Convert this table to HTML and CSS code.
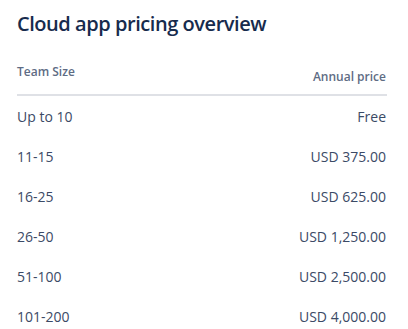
FILE: index.html
```html
<!DOCTYPE html>
<html>
<head>
<meta charset="utf-8">
<link rel="stylesheet" href="styles.css">
</head>
<body>
<div class="panel">
  <h2 class="title">Cloud app pricing overview</h2>
  <div class="table">
    <div class="head">
      <span class="th th-left">Team Size</span>
      <span class="th th-right">Annual price</span>
    </div>
    <div class="row"><span>Up to 10</span><span>Free</span></div>
    <div class="row"><span>11-15</span><span>USD 375.00</span></div>
    <div class="row"><span>16-25</span><span>USD 625.00</span></div>
    <div class="row"><span>26-50</span><span>USD 1,250.00</span></div>
    <div class="row"><span>51-100</span><span>USD 2,500.00</span></div>
    <div class="row"><span>101-200</span><span>USD 4,000.00</span></div>
  </div>
</div>
</body>
</html>
```
FILE: styles.css
```css
html, body {
  margin: 0;
  padding: 0;
  background: #ffffff;
}
.panel {
  width: 370px;
  padding: 10px 0 0 17px;
  font-family: "Open Sans", "Noto Sans", sans-serif;
}
.title {
  margin: 0;
  font-size: 20px;
  font-weight: 600;
  line-height: 28px;
  color: #172B4D;
  letter-spacing: -0.45px;
}
.table {
  margin-top: 26px;
}
.head {
  display: flex;
  justify-content: space-between;
  height: 30px;
  border-bottom: 2px solid #DFE1E6;
}
.th {
  font-size: 12px;
  font-weight: 600;
  color: #5E6C84;
  line-height: 16px;
}
.th-left {
  align-self: flex-start;
}
.th-right {
  align-self: flex-end;
  margin-bottom: 9px;
  margin-right: 1px;
}
.row {
  display: flex;
  justify-content: space-between;
  height: 40px;
  align-items: center;
  padding-right: 1px;
  font-size: 14px;
  color: #3B4A66;
}
```
